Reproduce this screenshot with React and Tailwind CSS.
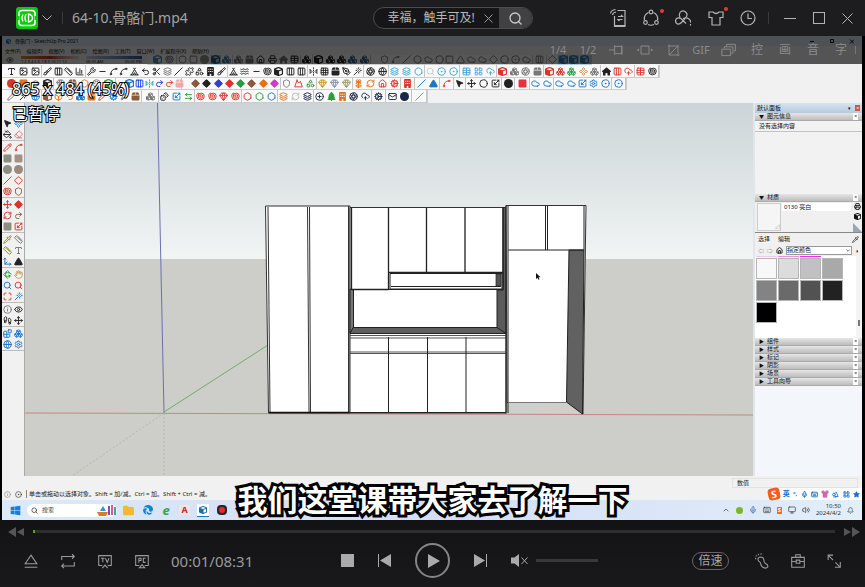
import React, { useState } from 'react'
import {
  Aperture, ArrowLeftRight, BarChart3, Bell, Blocks, Box, Boxes, Brush, ChevronUp, Circle, CircleDot,
  CirclePlus, Cloud, CloudUpload, Cog, Columns3, Component, Diamond, Dices, Eraser, Eye, Flower2, Footprints, Gem,
  Globe, Grid3x3, Hand, Hexagon, House, Image, Info, Layers, LayoutGrid, Mail, Maximize, Mic, Minus, Mountain,
  MousePointer2, Move, Move3d, PaintBucket, Palette, PenTool, Pencil, Pipette, Puzzle, RefreshCw, Rotate3d, Ruler,
  Scaling, Scissors, Search, Settings, Shapes, Shell, Shield, Slash, Spline, Square, Squircle, Star, Table, Tent,
  Trees, Triangle, Type, Undo2, Redo2, Volume2, Wand, Waves, Wrench, Monitor, Keyboard, Printer, Shirt, FlipHorizontal2,
} from 'lucide-react'
import { FaBox, FaBuilding, FaCircle, FaCube, FaCubes, FaEdge, FaFolder, FaHouse, FaSquare, FaTree, FaWindows } from 'react-icons/fa6'

const K = 'text-[#222]'
const G = 'text-[#777]'
const R = 'text-[#d8352c]'
const B = 'text-[#1d74c4]'
const C = 'text-[#41a5d6]'
const O = 'text-[#e2711c]'
const N = 'text-[#1b2748]'
const BR = 'text-[#8a5a3c]'
const GR = 'text-[#2c9a3f]'

// w is the width of the whole group, icons are spread inside it
// third value of an item: 1 = highlighted slot, 2 = filled shape
const shadowRow = [
  { w: 'w-[26px]', items: [[FaCube, 'text-[#4d8fbb]'], [Shell, G]] },
  { w: 'w-[56px]', items: [[Squircle, G], [Square, G], [FaCircle, 'text-[#8f9386]'], [FaCube, 'text-[#2d5878]', 1], [FaCubes, 'text-[#357ba8]']] },
  { w: 'w-[68px]', items: [[FaCubes, G], [FaBox, G], [House, K], [Printer, K], [FaHouse, G], [Table, K]] },
  { w: 'w-[12px]', items: [[FaCubes, K]] },
  { w: 'w-[58px]', items: [[FaCube, K], [FaCubes, K], [FaCubes, K], [FaCubes, 'text-[#2f5d88]'], [FaCubes, 'text-[#2f5d88]']] },
  { w: 'w-[162px] pl-2', items: [[Shield, G], [Spline, G], [Slash, G], [Hexagon, G], [Cloud, G], [Circle, G], [Square, G], [Triangle, G], [Cloud, G], [Cloud, G], [Diamond, G], [Circle, G], [CircleDot, G], [Cloud, G]] },
  { w: 'w-[14px]', items: [[Columns3, G]] },
  { w: 'w-[44px]', items: [[Diamond, G], [FaCube, 'text-[#2d7cb3]', 1], [FaCube, 'text-[#2d7cb3]', 1], [FaCube, 'text-[#2d7cb3]', 1]] },
]

const rowOne = [
  { w: 'w-[36px]', items: [[Type, K], [Image, K], [Image, K]] },
  { w: 'w-[44px]', items: [[Brush, K], [Columns3, K], [Ruler, K], [BarChart3, K]] },
  { w: 'w-[142px]', items: [[Wrench, K], [Minus, K], [Spline, K], [Spline, K], [Tent, K], [Undo2, K], [Scissors, K], [Layers, G], [Slash, K], [Puzzle, K], [Shapes, K], [FaBuilding, K], [Brush, K]] },
  { w: 'w-[80px]', items: [[Tent, K], [Waves, K], [Minus, K], [Shell, K], [FaCube, K], [Columns3, K], [Columns3, K]] },
  { w: 'w-[56px]', items: [[FlipHorizontal2, K], [Grid3x3, K], [FaBox, K], [PenTool, K], [Wand, K]] },
  { w: 'w-[25px]', items: [[Aperture, K], [Globe, K]] },
  { w: 'w-[36px]', items: [[Layers, C], [Layers, C], [Hexagon, C]] },
  { w: 'w-[35px]', items: [[Search, 'text-[#ccc]'], [CircleDot, C], [CircleDot, C]] },
  { w: 'w-[37px]', items: [[Table, C], [LayoutGrid, C], [CloudUpload, C]] },
  { w: 'w-[47px]', items: [[FaCube, R], [FaCubes, G], [Aperture, G], [FaBox, G]] },
  { w: 'w-[57px]', items: [[FaCube, R], [Boxes, R], [Boxes, GR], [Component, O], [Boxes, G]] },
  { w: 'w-[34px]', items: [[FaHouse, K], [Columns3, R], [CloudUpload, R]] },
  { w: 'w-[24px]', items: [[Table, R], [Shell, K]] },
]

const rowTwo = [
  { w: 'w-[48px]', items: [[FaCircle, R], [FaSquare, O], [Eye, G], [FaCube, K]] },
  { w: 'w-[62px]', items: [[Gem, G], [FaBox, BR], [Hexagon, O], [Palette, G], [FaCube, GR]] },
  { w: 'w-[66px] pl-2', items: [[FaCube, B], [Columns3, 'text-[#153ce0]'], [FlipHorizontal2, 'text-[#1b9ad2]'], [Redo2, 'text-[#2a35c4]'], [Redo2, R], [FaBox, 'text-[#efa8a8]']] },
  { w: 'w-[99px] pl-2', items: [[Diamond, BR, 2], [Diamond, K, 2], [Diamond, 'text-[#2f3fd0]', 2], [Diamond, R, 2], [Diamond, GR, 2], [Diamond, BR, 2], [Diamond, O, 2], [Diamond, 'text-[#d23bc8]', 2]] },
  { w: 'w-[36px]', items: [[Shield, G], [Mountain, R], [Shapes, GR]] },
  { w: 'w-[36px]', items: [[Gem, 'text-[#c99b1c]'], [Gem, 'text-[#7f8fae]'], [Gem, 'text-[#9b9862]']] },
  { w: 'w-[48px]', items: [[Flower2, O], [RefreshCw, O], [House, R], [Cog, R]] },
  { w: 'w-[14px]', items: [[FaBuilding, R]] },
  { w: 'w-[25px]', items: [[Slash, B], [Triangle, B, 2]] },
  { w: 'w-[14px]', items: [[Spline, R]] },
  { w: 'w-[12px]', items: [[MousePointer2, K, 2]] },
  { w: 'w-[36px]', items: [[Move, K], [Circle, K], [Scaling, K]] },
  { w: 'w-[13px]', items: [[FaCircle, K]] },
  { w: 'w-[15px]', items: [[FaSquare, 'text-[#e8303f]']] },
  { w: 'w-[24px]', items: [[Cloud, B], [Cloud, B]] },
  { w: 'w-[58px]', items: [[Cloud, B], [Cloud, B], [Scaling, B], [Settings, B], [CircleDot, B]] },
  { w: 'w-[14px]', items: [[CircleDot, B]] },
]

const rowThree = [
  { w: 'w-[36px]', items: [[Pencil, G], [Wand, K], [Globe, B]] },
  { w: 'w-[100px]', items: [[FaCube, BR], [Box, O], [Undo2, O], [FaCubes, B], [FaBox, O], [Pencil, R], [Cog, B], [Spline, G], [FaBox, BR]] },
  { w: 'w-[17px]', items: [[FaCubes, G]] },
  { w: 'w-[36px]', items: [[Dices, K], [Scaling, B], [ArrowLeftRight, GR]] },
  { w: 'w-[47px]', items: [[Shell, R], [Shell, R], [Gem, R], [Shell, R]] },
  { w: 'w-[36px]', items: [[Hexagon, R], [Hexagon, GR], [Hexagon, B]] },
  { w: 'w-[36px]', items: [[Layers, O], [RefreshCw, 'text-[#bbb]'], [Layers, N]] },
  { w: 'w-[58px]', items: [[CirclePlus, N], [FaTree, GR], [FaBuilding, O], [Aperture, N], [CloudUpload, N]] },
  { w: 'w-[14px]', items: [[Cog, N]] },
  { w: 'w-[26px]', items: [[Mail, N], [FaCircle, N]] },
  { w: 'w-[15px]', items: [[Slash, O]] },
]

const sideGroups = [
  [[MousePointer2, K, 2], [Component, B], [PaintBucket, K], [Eraser, 'text-[#d4717f]']],
  [[Pencil, R], [Spline, R], [FaSquare, 'text-[#8b8d7f]'], [FaSquare, 'text-[#a58f86]'], [FaCircle, 'text-[#8b8d7f]'], [FaCircle, 'text-[#9a8a7d]'], [Slash, R], [Diamond, R], [Shell, R], [Shield, BR]],
  [[Move, R], [Diamond, R, 2], [RefreshCw, R], [Redo2, BR], [FaSquare, 'text-[#8b8d7f]'], [Scaling, R]],
  [[Pipette, 'text-[#8a8a2a]'], [Ruler, G], [Ruler, 'text-[#8a8a2a]'], [Type, G], [Move3d, B], [Triangle, K, 2]],
  [[Rotate3d, GR], [Hand, 'text-[#c49b5c]'], [Search, B], [Search, R], [Maximize, R], [Wand, B]],
  [[Info, G], [Eye, K], [Footprints, K], [Move, K]],
  [[Blocks, B], [Boxes, B], [Globe, B], [Settings, B]],
]

const menus = ['文件(F)', '编辑(E)', '视图(V)', '相机(C)', '绘图(R)', '工具(T)', '窗口(W)', '扩展程序(X)', '帮助(H)']
const swatches = ['bg-[#f8f8f8]', 'bg-[#dcdcdc]', 'bg-[#c1c1c1]', 'bg-[#a9a9a9]', 'bg-[#838383]', 'bg-[#6a6a6a]', 'bg-[#525252]', 'bg-[#222]', 'bg-black']
const trayTabs = ['组件', '样式', '标记', '阴影', '场景', '工具向导']

const ToolIcon = ({ item }) => {
  const [Icon, color, mode] = item
  return (
    <span className={`flex size-[10px] shrink-0 items-center justify-center ${color} ${mode === 1 ? 'bg-[#a9cbe2]' : ''}`}>
      <Icon size={9} strokeWidth={2.5} fill={mode === 2 || !Icon.displayName ? 'currentColor' : 'none'} />
    </span>
  )
}

const ToolRow = ({ groups }) => (
  <div className="flex h-full w-max items-center border-r border-b border-[#ccc] bg-[#f9f9f9] pl-1">
    {groups.map((g, i) => (
      <div key={i} className={`flex h-full items-center justify-around border-r border-[#c4c4c4] ${g.w}`}>
        {g.items.map((item, j) => <ToolIcon key={j} item={item} />)}
      </div>
    ))}
  </div>
)

const Svg = ({ size = 20, className = '', children }) => (
  <svg width={size} height={size} viewBox="0 0 20 20" fill="none" stroke="currentColor" strokeWidth="1.2" className={`shrink-0 ${className}`}>
    {children}
  </svg>
)

const IconButton = ({ label, className = '', children }) => (
  <button type="button" aria-label={label} title={label} className={`relative flex items-center justify-center hover:text-white ${className}`}>
    {children}
  </button>
)

const TopBar = () => {
  const [query, setQuery] = useState('幸福，触手可及!')
  return (
    <header className="relative flex h-9 shrink-0 items-center bg-[#1d1d1f] pr-[3px] pl-4 text-[#b4b4b4]">
      <svg width="22" height="22" viewBox="0 0 22 22" fill="none" className="shrink-0">
        <rect width="22" height="22" rx="3" fill="#0dc80d" />
        <path d="M6 3.5h10q3 0 3 3v9q0 3-3 3H6q-3 0-3-3v-9q0-3 3-3z" stroke="#fff" strokeWidth="1.6" />
        <path d="M2.500 9v4M19.500 9v4" stroke="#0dc80d" strokeWidth="2" />
        <path d="M7 7.500q-2 3.500 0 7M10 7q-2 4 0 8M12.500 7v8q4-1 4-4t-4-4z" stroke="#fff" strokeWidth="1.300" />
      </svg>
      <IconButton label="菜单" className="ml-1 w-[10px]">
        <svg width="10" height="6" viewBox="0 0 10 6" fill="none" stroke="currentColor"><path d="M.5.500 5 5 9.500.500" /></svg>
      </IconButton>
      <span className="ml-[10px] h-3 w-px bg-[#3a3a3c]" />
      <h1 className="ml-[9px] text-[14px] leading-5 text-[#a3a3a3]">64-10.骨骼门.mp4</h1>

      <div className="absolute left-1/2 ml-[-60px] flex h-[22px] w-40 items-center overflow-hidden rounded-full border border-[#4b4b4e] bg-[#161618]">
        <input
          aria-label="搜索"
          value={query}
          onChange={(e) => setQuery(e.target.value)}
          className="w-[110px] bg-transparent pl-[14px] text-[12px] leading-5 text-[#b8b8b8] outline-0"
        />
        <button type="button" aria-label="清除" onClick={() => setQuery('')} className="flex w-[15px] shrink-0 items-center">
          <svg width="9" height="9" viewBox="0 0 9 9" stroke="#999"><path d="M.5.500l8 8M8.500.500l-8 8" /></svg>
        </button>
        <button type="button" aria-label="查找" className="flex h-full grow items-center justify-center bg-[#414144] text-[#c8c8c8]">
          <svg width="13" height="13" viewBox="0 0 13 13" fill="none" stroke="currentColor" strokeWidth="1.300"><circle cx="6" cy="6" r="5" /><path d="m9.500 9.500 3 3" /></svg>
        </button>
      </div>

      <div className="ml-auto flex items-center">
        <IconButton label="传输" className="w-8">
          <Svg><path d="M8.500 2.500H16V18M5.500 18V8M9 8.500h4.500L12 7M13.500 11.500H9l1.500 1.500M1.500 5.500q.5-3.500 5-4M3.500 7q.3-2.500 3.500-3" /><path d="M5 18h11.500" strokeWidth="2" /></Svg>
        </IconButton>
        <IconButton label="分享" className="w-8">
          <Svg><circle cx="10" cy="4" r="1.800" /><circle cx="4.500" cy="14.500" r="1.800" /><circle cx="15.500" cy="14.500" r="1.800" /><path d="M7.500 4.500Q2.500 7 3.500 12M12.500 4.500Q17.500 7 16.500 12M7 16.500q3 1.500 6 0" /></Svg>
          <i className="absolute top-[1px] right-[3px] size-1 rounded-full bg-[#f03434]" />
        </IconButton>
        <IconButton label="云端" className="w-8">
          <Svg><path d="M7 9.500Q5.500 7 7 4.500 9 2 12 3.500q3 2 1.500 5Q12 11 8.500 14.500 6 17 3.500 15.500 1.500 13 3.500 10.500 6 9 8.500 11L13 15.500M10 10.500q3.500-1.500 6 .5 2 1.500 1.500 3.500M17.500 16v1.500" /></Svg>
        </IconButton>
        <IconButton label="皮肤" className="w-[33px]">
          <Svg><path d="M3 4h4q3 3 6 0h4v5.500h-3V17H6V9.500H3z" /></Svg>
          <i className="absolute top-[-1px] right-1 size-1 rounded-full bg-[#f03434]" />
        </IconButton>
        <IconButton label="历史" className="w-8">
          <Svg><circle cx="10" cy="10" r="7" /><path d="M10 5.500V10.500H14" /></Svg>
        </IconButton>
        <span className="mx-1 h-3 w-px bg-[#3a3a3c]" />
        <IconButton label="最小化" className="ml-0.5 w-[29px]"><span className="h-px w-3 bg-current" /></IconButton>
        <IconButton label="最大化" className="w-[29px]"><span className="size-3 border border-current" /></IconButton>
        <IconButton label="关闭" className="w-[29px]">
          <svg width="11" height="11" viewBox="0 0 11 11" stroke="currentColor"><path d="m.5.500 10 10M10.500.500l-10 10" /></svg>
        </IconButton>
      </div>
    </header>
  )
}

// strip that slides over the top of the video
const QuickStrip = () => (
  <div className="absolute inset-x-0 top-0 flex h-7 items-center justify-end bg-black/65 pr-[9px] text-[12px] text-[#8b8b8b]">
    <button type="button" className="w-[30px] text-[11px]">1/4</button>
    <button type="button" className="w-[30px] text-[11px]">1/2</button>
    <IconButton label="左转" className="w-7"><Svg size={16}><path d="M0 10h7M7 4v12M7 5.500h9v9H7M16 4v12" /></Svg></IconButton>
    <IconButton label="适应" className="w-7"><Svg size={16}><path d="M5 5h10v10H5zM0 10h2M18 10h2M2 8.500V11.500M18 8.500V11.500" /></Svg></IconButton>
    <IconButton label="裁剪" className="w-7"><Svg size={15}><path d="M3 4h13v13M4 2v14h14M4 16 17 3" /></Svg></IconButton>
    <button type="button" className="w-7 text-[11px]">GIF</button>
    <IconButton label="连拍" className="w-7"><Svg size={16}><path d="M1 9h11v8H1zM4 8V6h11v8h-2M7 5V3h11v8h-2" /></Svg></IconButton>
    {['控', '画', '音', '字'].map((t) => <button key={t} type="button" className="w-7">{t}</button>)}
    <span className="h-2 w-px bg-[#777]" />
  </div>
)

const Scene = () => (
  <svg viewBox="25 103 728 373" preserveAspectRatio="none" className="block min-w-0 flex-1" role="img" aria-label="柜体模型">
    <defs>
      <linearGradient id="sky" x1="0" y1="0" x2="0" y2="1">
        <stop offset="0" stopColor="#ccd4d7" />
        <stop offset="1" stopColor="#f1f5f4" />
      </linearGradient>
    </defs>
    <rect x="25" y="103" width="728" height="156" fill="url(#sky)" />
    <rect x="25" y="259" width="728" height="217" fill="#cdcdc9" />
    <path d="M157.500 103 164 413" stroke="#6e6eb4" />
    <path d="M164 412 268 345" stroke="#6fae68" />
    <path d="M25 413 753 415" stroke="#c08a86" />
    <path d="M164 413 72 476M164 413v63" stroke="#aaa" strokeWidth=".7" strokeDasharray="2 2" />

    {/* tall cabinet */}
    <path d="M265.500 206h84.500v207h-81.500z" fill="#fff" stroke="#333" />
    <path d="M268 207l2 205M307.500 207l1.500 205M309.500 207l1 205M348.500 206v207" stroke="#333" fill="none" />
    <path d="M269 412.500h81" stroke="#111" strokeWidth="1.500" />

    {/* wall units, niche and worktop */}
    <path d="M350 207.500h156V413H350z" fill="#fff" stroke="#333" />
    <path d="M503 207.500h3V334l-9-6v-38h6z" fill="#5a5a5a" stroke="#222" />
    <path d="M350 289l3.500 1v38l-3.500 5z" fill="#777" stroke="#222" />
    <path d="M353 327.500h144l9 6H350z" fill="#5f5f5f" stroke="#222" />
    <path d="M351.500 207.500v82h37M388.500 207.500v82M426.500 208v64.500M465 208v64.500M503 208v82M388 272.500h115" stroke="#222" fill="none" strokeWidth="1.300" />
    <path d="M390 273.500h112v15.500H390zM391 286.500h110" stroke="#222" fill="none" />
    <path d="M496 274h5v12h-5z" fill="#555" stroke="#222" strokeWidth=".7" />
    <path d="M388 289.500h115" stroke="#222" />
    <path d="M350 335.500h156M350 338h156M350 352h156M350 353.500h156" stroke="#444" strokeWidth=".9" />
    <path d="M388.500 337v75M427.500 337v75M466 337v75M350 412.500h156" stroke="#222" />

    {/* fridge housing */}
    <path d="M506 205.500h80L583 414l-16-11.500H507z" fill="#fff" stroke="#333" />
    <path d="M508 402.500h59l14 10.500h-73z" fill="#cfcfcb" />
    <path d="M569 250h15l-1.500 164-16-12z" fill="#616161" stroke="#222" />
    <path d="M506 205.500V413.500M508 206v207M545.500 206v44M547.500 206v44M584 206v44M508 250h76" stroke="#222" fill="none" />
    <path d="M508 402.500h59" stroke="#777" />
    <path d="M536 273v6l1.500-1.300 1 2 1-.5-1-2h2z" fill="#111" />
  </svg>
)

const TrayHead = ({ open, children }) => (
  <h2 className="flex h-2 items-center border-b border-[#aaa] bg-linear-to-b from-[#e6e6e6] to-[#bcbcbc] px-1 text-[6px] leading-[7px] text-[#111]">
    <span className="w-2 text-[5px]">{open ? '▼' : '▶'}</span>
    {children}
    <span className="ml-auto bg-white px-px text-[5px]">×</span>
  </h2>
)

const Tray = () => (
  <aside className="flex w-[109px] shrink-0 flex-col border-l-2 border-[#e2e6ea] bg-[#f3f6fb] text-[6px] leading-[8px] text-[#111]">
    <div className="flex h-[10px] items-center bg-linear-to-b from-[#d6e3f1] to-[#b6cade] px-0.5">
      默认面板
      <span className="mr-1 ml-auto text-[5px]">▾</span>
      <span className="bg-[#d65046] px-px text-[5px] leading-[6px] text-white">×</span>
    </div>
    <TrayHead open>图元信息</TrayHead>
    <p className="h-[11px] border-b border-[#c4c4c4] bg-[#f2f2f2] pl-1 leading-[10px]">没有选择内容</p>
    <div className="h-[62px] bg-[#f2f2f2]" />
    <TrayHead open>材质</TrayHead>
    <div className="flex h-[31px] gap-px border-b border-[#888] bg-[#f0f0f0] pt-px pl-0.5">
      <div className="mb-px flex w-6 items-end justify-end border border-[#ccc] bg-[#f5f5f5] text-[#aaa]">◿</div>
      <input aria-label="材质名称" defaultValue="0130 亮白" className="h-2 min-w-0 flex-1 bg-white px-0.5 text-[6px] outline-0" />
      <div className="flex w-[10px] flex-col items-center justify-between">
        <Printer size={7} strokeWidth={3} />
        <FaCube size={7} />
        <svg width="9" height="9" viewBox="0 0 9 9"><path d="M0 0v9h9z" fill="#9aa6b2" /></svg>
      </div>
    </div>
    <div className="flex h-3 items-center gap-2 bg-[#f0f0f0] px-[3px]">
      <button type="button" className="bg-white">选择</button>
      <button type="button">编辑</button>
      <Pipette size={7} className="ml-auto" />
    </div>
    <div className="flex h-[11px] items-center gap-[3px] bg-[#f0f0f0] px-[3px]">
      <span className="text-[#777]">⇦</span>
      <span className="text-[#777]">⇨</span>
      <House size={7} strokeWidth={3} />
      <div className="flex h-[9px] min-w-0 flex-1 items-center border border-[#999] bg-white pr-px">
        <select aria-label="材质库" className="min-w-0 flex-1 appearance-none text-[6px] leading-[7px] outline-0">
          <option>指定颜色</option>
        </select>
        <svg width="4" height="3" viewBox="0 0 4 3" fill="none" stroke="#555" strokeWidth=".8"><path d="m.3.5 1.700 1.700L3.700.500" /></svg>
      </div>
      <span>◗</span>
    </div>
    <div className="flex h-[82px] bg-white">
      <div className="grid grid-cols-[repeat(4,21px)] grid-rows-[1px_repeat(3,21px)] gap-px pl-px">
        <i className="bg-[#f3c4ef]" />
        <i className="bg-[#ee8fe6]" />
        <i className="bg-[#f62cf0]" />
        <i className="bg-white" />
        {swatches.map((c) => <button key={c} type="button" aria-label="颜色" className={`border border-[#b5b5b5] ${c}`} />)}
      </div>
      <div className="ml-auto flex w-[6px] items-end justify-center bg-[#f3f3f3] pb-3">
        <span className="h-[6px] w-0.5 bg-[#777]" />
      </div>
    </div>
    {trayTabs.map((t) => <TrayHead key={t}>{t}</TrayHead>)}
  </aside>
)

const Taskbar = () => (
  <div className="flex h-5 shrink-0 items-center bg-linear-to-r from-[#dbe9f8] via-[#d2def6] to-[#e2eef8] pr-2 pl-2 text-[6px] leading-[8px] text-[#333]">
    <FaWindows size={11} className="text-[#1380d8]" />
    <label className="ml-[6px] flex h-[13px] w-[90px] items-center gap-1 rounded-full bg-white pl-1">
      <Search size={7} strokeWidth={2.5} />
      <input aria-label="搜索" placeholder="搜索" className="w-10 text-[6px] placeholder:text-[#444]" />
      <svg width="20" height="11" viewBox="0 0 20 11" className="ml-auto">
        <path d="M0 7h11l-2 4H2z" fill="#d97b2c" /><path d="M3 6l3-5 3 5z" fill="#3b8fd6" />
        <path d="M11 1h2v9h-2z" fill="#7b4fc0" /><path d="M14 0h2v10h-2z" fill="#e0559a" /><path d="M17 2h2v8h-2z" fill="#3aa7a0" />
      </svg>
    </label>
    <div className="ml-0.5 flex items-center">
      <span className="flex w-[19px] justify-center"><FaFolder size={11} className="text-[#f5b92e]" /></span>
      <span className="flex w-[19px] justify-center"><FaEdge size={10} className="text-[#1583c7]" /></span>
      <span className="flex w-[18px] justify-center text-[13px] font-bold text-[#35a83a] italic">e</span>
      <span className="flex w-[19px] justify-center"><b className="bg-[#f6e3e1] px-0.5 text-[9px] leading-[10px] text-[#c8242b]">A</b></span>
      <span className="flex w-[18px] justify-center"><span className="border-b border-[#1b72c9] bg-white p-0.5"><FaCube size={8} className="text-[#1b6fa8]" /></span></span>
      <span className="flex w-[19px] justify-center"><span className="rounded-sm bg-[#2c2427] p-0.5"><FaCircle size={6} className="text-[#e32c2c]" /></span></span>
    </div>
    <div className="ml-auto flex items-center gap-[6px]">
      <ChevronUp size={8} />
      <FaCircle size={7} className="text-[#7bb52d]" />
      <Mic size={8} className="text-[#2a5ca8]" />
      <Keyboard size={8} />
      <b className="bg-[#ee6a35] px-px leading-[7px] text-white">S</b>
      <Monitor size={8} />
      <Volume2 size={8} />
      <div className="text-right leading-[7px]">10:50<br />2024/4/2</div>
      <Bell size={7} />
    </div>
  </div>
)

const VideoFrame = () => (
  <main className="relative flex min-h-0 flex-1 bg-black pr-[3px] pl-0.5">
    <div className="flex min-w-0 flex-1 flex-col overflow-hidden bg-[#f1f1f1]">
      <div className="flex h-[10px] items-center gap-1 bg-[#dce8f2] px-1 text-[5px] leading-[8px] text-[#111]">
        <FaCube size={5} className="text-[#1b72a8]" />
        骨骼门 - SketchUp Pro 2021
        <svg width="44" height="5" viewBox="0 0 44 5" fill="none" stroke="currentColor" className="mr-1 ml-auto">
          <path d="M0 2.500h4M20.500.500h3v3h-3zM40 .500l4 4M44 .500l-4 4" />
        </svg>
      </div>
      <nav className="flex h-[9px] items-center gap-[6px] px-[3px] text-[5px] leading-[8px] text-[#111]">
        {menus.map((m) => <span key={m}>{m}</span>)}
      </nav>
      <div className="flex h-[10px] items-center">
        <div className="flex w-[145px] gap-[7px] pl-1 text-[4px] leading-[5px] text-[#222]">
          <Eye size={8} />
          <div className="w-[58px]"><div className="h-[3px] bg-linear-to-r from-[#d98a2c] via-[#c42f2a] to-[#ddd]" />1 2 3 4 5 6 7 8 9 10 11 12</div>
          <div className="flex w-[56px] flex-wrap justify-between"><div className="h-[3px] w-full bg-linear-to-r from-[#ccd] to-[#2c55b0]" /><span>06:55 AM</span><span>05:00 PM</span></div>
        </div>
        <ToolRow groups={shadowRow} />
      </div>
      <div className="h-[13px]"><ToolRow groups={rowOne} /></div>
      <div className="h-3"><ToolRow groups={rowTwo} /></div>
      <div className="h-[13px]"><ToolRow groups={rowThree} /></div>

      <div className="flex min-h-0 flex-1">
        <div className="w-[23px] shrink-0 border-r border-[#aaa] pt-[14px]">
          {sideGroups.map((g, i) => (
            <div key={i} className="grid grid-cols-2 justify-items-center gap-y-px border-b border-[#bbb] pt-px pb-px">
              {g.map((item, j) => <ToolIcon key={j} item={item} />)}
            </div>
          ))}
        </div>
        <Scene />
        <Tray />
      </div>

      <div className="flex h-6 shrink-0 items-end justify-between text-[6px] leading-[8px] text-[#222]">
        <div className="flex items-center gap-1 pb-0.5 pl-0.5">
          <Info size={7} className="text-[#888]" />
          <CircleDot size={7} />
          <span className="border-l border-[#888] pl-0.5">单击或拖动以选择对象。Shift = 加/减。Ctrl = 加。Shift + Ctrl = 减。</span>
        </div>
        <div className="flex w-[130px] flex-col">
          <span className="mr-1 border border-[#e2e2e2] pl-1">数值</span>
          <div className="ml-9 flex h-3 items-center justify-between bg-white pr-0.5 text-[#1a6fd0]">
            <b className="-rotate-12 rounded-sm bg-[#ee5f22] px-[3px] text-[10px] leading-[12px] text-white">S</b>
            <b className="text-[7px]">英</b>
            <b>°,</b>
            <Mic size={7} strokeWidth={3} />
            <Keyboard size={7} strokeWidth={3} />
            <Shirt size={8} className="text-[#d268b0]" fill="currentColor" />
            <Trees size={7} strokeWidth={3} />
            <LayoutGrid size={7} strokeWidth={3} />
            <Star size={7} fill="currentColor" />
          </div>
        </div>
      </div>
      <Taskbar />
    </div>

    <QuickStrip />
    <div className="absolute top-[41px] left-3 text-[16px] leading-[25px] text-white [-webkit-text-stroke:2px_#000] [paint-order:stroke]">
      <p>865 x 484 (45%)</p>
      <p>已暂停</p>
    </div>
    <p className="absolute inset-x-0 bottom-0 text-center text-[30px] leading-10 font-bold text-white [-webkit-text-stroke:6px_#000] [paint-order:stroke]">
      我们这堂课带大家去了解一下
    </p>
  </main>
)

const Controls = () => (
  <footer className="h-[67px] shrink-0 bg-linear-to-b from-[#131315] to-[#19191b] text-[#9a9a9a]">
    <div className="flex h-[23px] items-center pr-[5px] pl-2">
      <button type="button" aria-label="后退" className="text-[#555]">
        <svg width="16" height="10" viewBox="0 0 16 10" fill="currentColor"><path d="M8 0v10L0 5zM16 1v8L9 5z" /></svg>
      </button>
      <input
        type="range"
        aria-label="播放进度"
        min="0"
        max="511"
        defaultValue="0"
        className="mx-[9px] h-[3px] min-w-0 flex-1 appearance-none bg-[#2e2e30] [&::-webkit-slider-thumb]:h-[3px] [&::-webkit-slider-thumb]:w-0.5 [&::-webkit-slider-thumb]:appearance-none [&::-webkit-slider-thumb]:bg-[#3fae1c]"
      />
      <button type="button" aria-label="快进" className="text-[#555]">
        <svg width="16" height="10" viewBox="0 0 16 10" fill="currentColor"><path d="M0 1v8l7-4zM8 0v10l8-5z" /></svg>
      </button>
    </div>

    <div className="grid h-[35px] grid-cols-[1fr_auto_1fr] items-center">
      <div className="flex items-center pl-3">
        <IconButton label="打开" className="w-[37px]"><Svg size={18}><path d="M10 3.500 16.500 13h-13zM3 17h14" /></Svg></IconButton>
        <IconButton label="循环" className="w-[37px]"><Svg size={18}><path d="M3 9V5h14M14.500 2.500 17 5l-2.500 2.500M17 11v4.500H3M5.500 13 3 15.500 5.500 18" /></Svg></IconButton>
        <IconButton label="投屏" className="w-[37px]"><Svg size={18}><path d="M7 15H3V4h14v11h-4M7 18l3-3.500 3 3.500M5.500 7h4M7.500 7v4.500M10.500 7l2 4.500 2-4.500" /></Svg></IconButton>
        <IconButton label="电脑" className="w-[37px]"><Svg size={18}><path d="M7 15H3V4h14v11h-4M7 17.500 10 14l3 3.500zM6.500 12V7H9v2.500H6.500M14 7h-2.500v4.500H14" /></Svg></IconButton>
        <time className="ml-[11px] text-[15px] leading-5">00:01/08:31</time>
        <IconButton label="停止" className="mr-6 ml-auto"><span className="size-[13px] bg-[#aaa]" /></IconButton>
      </div>

      <div className="flex items-center gap-6 text-[#aaa]">
        <IconButton label="上一个"><svg width="13" height="13" viewBox="0 0 13 13" fill="currentColor"><path d="M0 0h1v13H0zM13 0v13L2 6.500z" /></svg></IconButton>
        <IconButton label="播放" className="size-[35px] rounded-full border-2 border-[#858585]">
          <svg width="12" height="14" viewBox="0 0 12 14" fill="currentColor" className="ml-0.5"><path d="M0 0v14l12-7z" /></svg>
        </IconButton>
        <IconButton label="下一个"><svg width="13" height="13" viewBox="0 0 13 13" fill="currentColor"><path d="M12 0h1v13h-1zM0 0v13l11-6.500z" /></svg></IconButton>
      </div>

      <div className="flex items-center pr-[13px] pl-6">
        <IconButton label="静音">
          <svg width="17" height="13" viewBox="0 0 17 13" fill="#aaa"><path d="M0 3.500h3.500L8 0v13L3.500 9.500H0z" /><path d="m10.500 3.500 6 6.500M16.500 3.500l-6 6.500" stroke="#aaa" /></svg>
        </IconButton>
        <input
          type="range"
          aria-label="音量"
          defaultValue="0"
          className="ml-2 h-[3px] w-[62px] appearance-none bg-[#38383a] [&::-webkit-slider-thumb]:size-0 [&::-webkit-slider-thumb]:appearance-none"
        />
        <button type="button" className="mr-[15px] ml-auto h-[18px] w-[37px] rounded-full border border-[#666] text-[12px] leading-4 text-[#aaa]">倍速</button>
        <IconButton label="脚步" className="w-9">
          <Svg size={18}><path d="M5.500 8q0-2 3-2.500 3 0 3.500 3 0 2 1.500 4 3.500 1.500 3 4-2 2.500-5.500.500Q8.500 15 8 11.500 5.500 10 5.500 8z" /><path d="M3 6.500V8M3.500 3.500V5M6 2v1.500M9 1.500V3" /></Svg>
        </IconButton>
        <IconButton label="工具箱" className="w-9">
          <Svg size={18}><path d="M3 6h14v11H3zM7.500 6V3h5v3M3 10.500h5M12 10.500h5M8 9h4v3.500H8z" /></Svg>
        </IconButton>
        <IconButton label="全屏" className="w-9">
          <Svg size={18}><path d="M3.500 9V3.500H9M3.500 3.500 9 9M17 11v6h-6M17 17l-5.500-5.500" /></Svg>
        </IconButton>
      </div>
    </div>
  </footer>
)

const App = () => {
  return (
    <div className="flex h-screen min-h-[420px] w-full flex-col overflow-hidden bg-[#151517] font-['Noto_Sans','Noto_Sans_CJK_SC',sans-serif]">
      <TopBar />
      <VideoFrame />
      <Controls />
    </div>
  )
}

export default App
